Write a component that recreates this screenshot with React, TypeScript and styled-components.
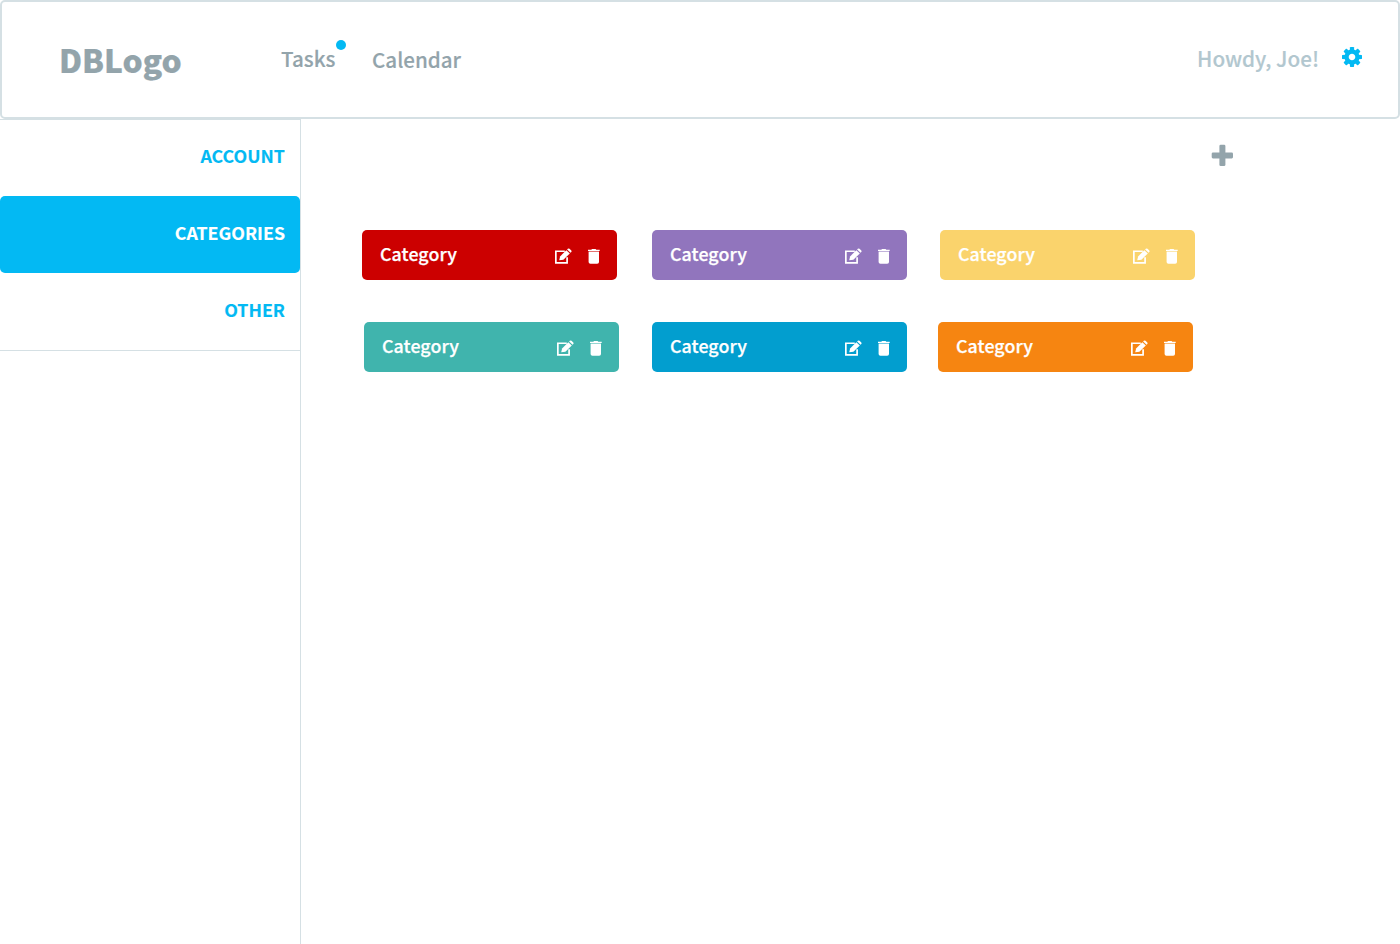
import React from "react";
import styled, { createGlobalStyle } from "styled-components";

const GlobalStyle = createGlobalStyle`
  *, *::before, *::after { box-sizing: border-box; }
  body {
    margin: 0;
    background: #fff;
    font-family: "Noto Sans CJK SC", "Noto Sans", sans-serif;
  }
`;

const Page = styled.div`
  display: flex;
  flex-direction: column;
  height: 944px;
  overflow: hidden;
`;

const Header = styled.header`
  display: flex;
  align-items: flex-start;
  flex: none;
  height: 119px;
  padding: 0 36px 0 57px;
  border: 2px solid #d5e0e4;
  border-radius: 5px;
`;

const Logo = styled.div`
  width: 222px;
  padding-top: 34px;
  color: #93a4ab;
  font-size: 31.7px;
  font-weight: 900;
  line-height: 46px;
  -webkit-text-stroke: 0.2px currentColor;
`;

const TopNav = styled.nav`
  display: flex;
  gap: 36.6px;
  flex: 1;
`;

const NavLink = styled.a<{ $top: number }>`
  position: relative;
  margin-top: ${(p) => p.$top}px;
  color: #93a4ab;
  font-size: 20.6px;
  font-weight: 500;
  line-height: 32px;
  -webkit-text-stroke: 0.15px currentColor;
`;

const Dot = styled.span`
  position: absolute;
  top: -2px;
  right: -10.6px;
  width: 10px;
  height: 10px;
  border-radius: 50%;
  background: #03b9f3;
`;

const Greeting = styled.div`
  margin: 40px 23px 0 0;
  color: #b2c7cf;
  font-size: 20.7px;
  font-weight: 500;
  line-height: 32px;
  -webkit-text-stroke: 0.15px currentColor;
`;

const GearButton = styled.div`
  display: flex;
  margin-top: 45px;
`;

const Body = styled.div`
  display: flex;
  flex: 1;
`;

const Sidebar = styled.aside`
  width: 301px;
  border-right: 1px solid #d5e0e4;
`;

const Menu = styled.nav`
  height: 232px;
  border: solid #d5e0e4;
  border-width: 1px 0;
`;

const MenuItem = styled.a<{ $active?: boolean; $first?: boolean }>`
  display: flex;
  align-items: center;
  justify-content: flex-end;
  height: ${(p) => (p.$first ? 76 : 77)}px;
  padding: 0 15px 6px 0;
  border-radius: 5px;
  background: ${(p) => (p.$active ? "#03b9f3" : "transparent")};
  color: ${(p) => (p.$active ? "#fff" : "#03b9f3")};
  font-size: 17.8px;
  font-weight: 700;
  line-height: 26px;
  -webkit-text-stroke: 0.15px currentColor;
`;

const Main = styled.main`
  flex: 1;
  padding-left: 61px;
`;

const Toolbar = styled.div`
  display: flex;
  justify-content: flex-end;
  height: 111px;
  padding: 25px 167px 0 0;
`;

const CardRow = styled.div<{ $indent: number; $gap: number; $gap2: number }>`
  display: grid;
  grid-template-columns: 255px ${(p) => p.$gap}px 255px ${(p) => p.$gap2}px 255px;
  margin: 0 0 42px ${(p) => p.$indent}px;
  > :nth-child(2) { grid-column: 3; }
  > :nth-child(3) { grid-column: 5; }
`;

const Card = styled.div<{ $color: string }>`
  display: flex;
  align-items: flex-start;
  height: 50px;
  padding: 10px 17px 0 18px;
  border-radius: 5px;
  background: ${(p) => p.$color};
  color: #fff;
`;

const CardTitle = styled.span`
  flex: 1;
  font-size: 17.8px;
  font-weight: 500;
  line-height: 26px;
  letter-spacing: 0.08px;
  -webkit-text-stroke: 0.25px currentColor;
`;

const CardActions = styled.div`
  display: flex;
  gap: 16px;
  padding-top: 8px;
`;

const Gear = () => (
  <svg width="20" height="20" viewBox="-10 -10 20 20" fill="none">
    <circle r="5.4" stroke="#03b9f3" strokeWidth="4.2" />
    {[0, 45, 90, 135, 180, 225, 270, 315].map((a) => (
      <path key={a} transform={`rotate(${a})`} d="M-2.3 -6.6 L-2 -9.6 Q-1.9 -10 -1.5 -10 H1.5 Q1.9 -10 2 -9.6 L2.3 -6.6Z" fill="#03b9f3" />
    ))}
  </svg>
);

const Plus = () => (
  <svg width="22" height="22" viewBox="0 0 22 22" fill="#93a4ab">
    <rect x="8.4" y="0.7" width="6" height="21.3" rx="1.3" />
    <rect x="0.7" y="8.4" width="21.3" height="6" rx="1.3" />
  </svg>
);

const EditIcon = () => (
  <svg width="17" height="16" viewBox="0 0 17 16">
    <path d="M9.8 3.25H.85V14.85H12.1V9.2" fill="none" stroke="#fff" strokeWidth="1.7" />
    <path d="M4.2 12.2 5.1 8.4 11.3 2.2 14.8 5.5 8.4 11.7Z" fill="#fff" />
    <path d="M12.1 1.5 12.8 .8Q13.7 0 14.5.8L16.3 2.6Q17 3.3 16.3 4L15.6 4.7Z" fill="#fff" />
  </svg>
);

const TrashIcon = () => (
  <svg width="12" height="16" viewBox="0 0 12 16" fill="#fff">
    <path d="M0 1.7H3.3L4 1H7.6L8.3 1.7H11.7V3H0Z" />
    <path d="M.6 4H11V14Q11 15.8 9.2 15.8H2.4Q.6 15.8.6 14Z" />
    <path d="M.6 3H11V4H.6Z" opacity="0.45" />
  </svg>
);

const CategoryCard = ({ color }: { color: string }) => (
  <Card $color={color}>
    <CardTitle>Category</CardTitle>
    <CardActions>
      <EditIcon />
      <TrashIcon />
    </CardActions>
  </Card>
);

export default function App() {
  return (
    <Page>
      <GlobalStyle />
      <Header>
        <Logo>DBLogo</Logo>
        <TopNav>
          <NavLink $top={40}>
            Tasks
            <Dot />
          </NavLink>
          <NavLink $top={41}>Calendar</NavLink>
        </TopNav>
        <Greeting>Howdy, Joe!</Greeting>
        <GearButton>
          <Gear />
        </GearButton>
      </Header>
      <Body>
        <Sidebar>
          <Menu>
            <MenuItem $first>ACCOUNT</MenuItem>
            <MenuItem $active>CATEGORIES</MenuItem>
            <MenuItem>OTHER</MenuItem>
          </Menu>
        </Sidebar>
        <Main>
          <Toolbar>
            <Plus />
          </Toolbar>
          <CardRow $indent={0} $gap={35} $gap2={33}>
            <CategoryCard color="#cc0000" />
            <CategoryCard color="#9175bd" />
            <CategoryCard color="#fad36c" />
          </CardRow>
          <CardRow $indent={2} $gap={33} $gap2={31}>
            <CategoryCard color="#40b4ad" />
            <CategoryCard color="#029ecf" />
            <CategoryCard color="#f68511" />
          </CardRow>
        </Main>
      </Body>
    </Page>
  );
}
